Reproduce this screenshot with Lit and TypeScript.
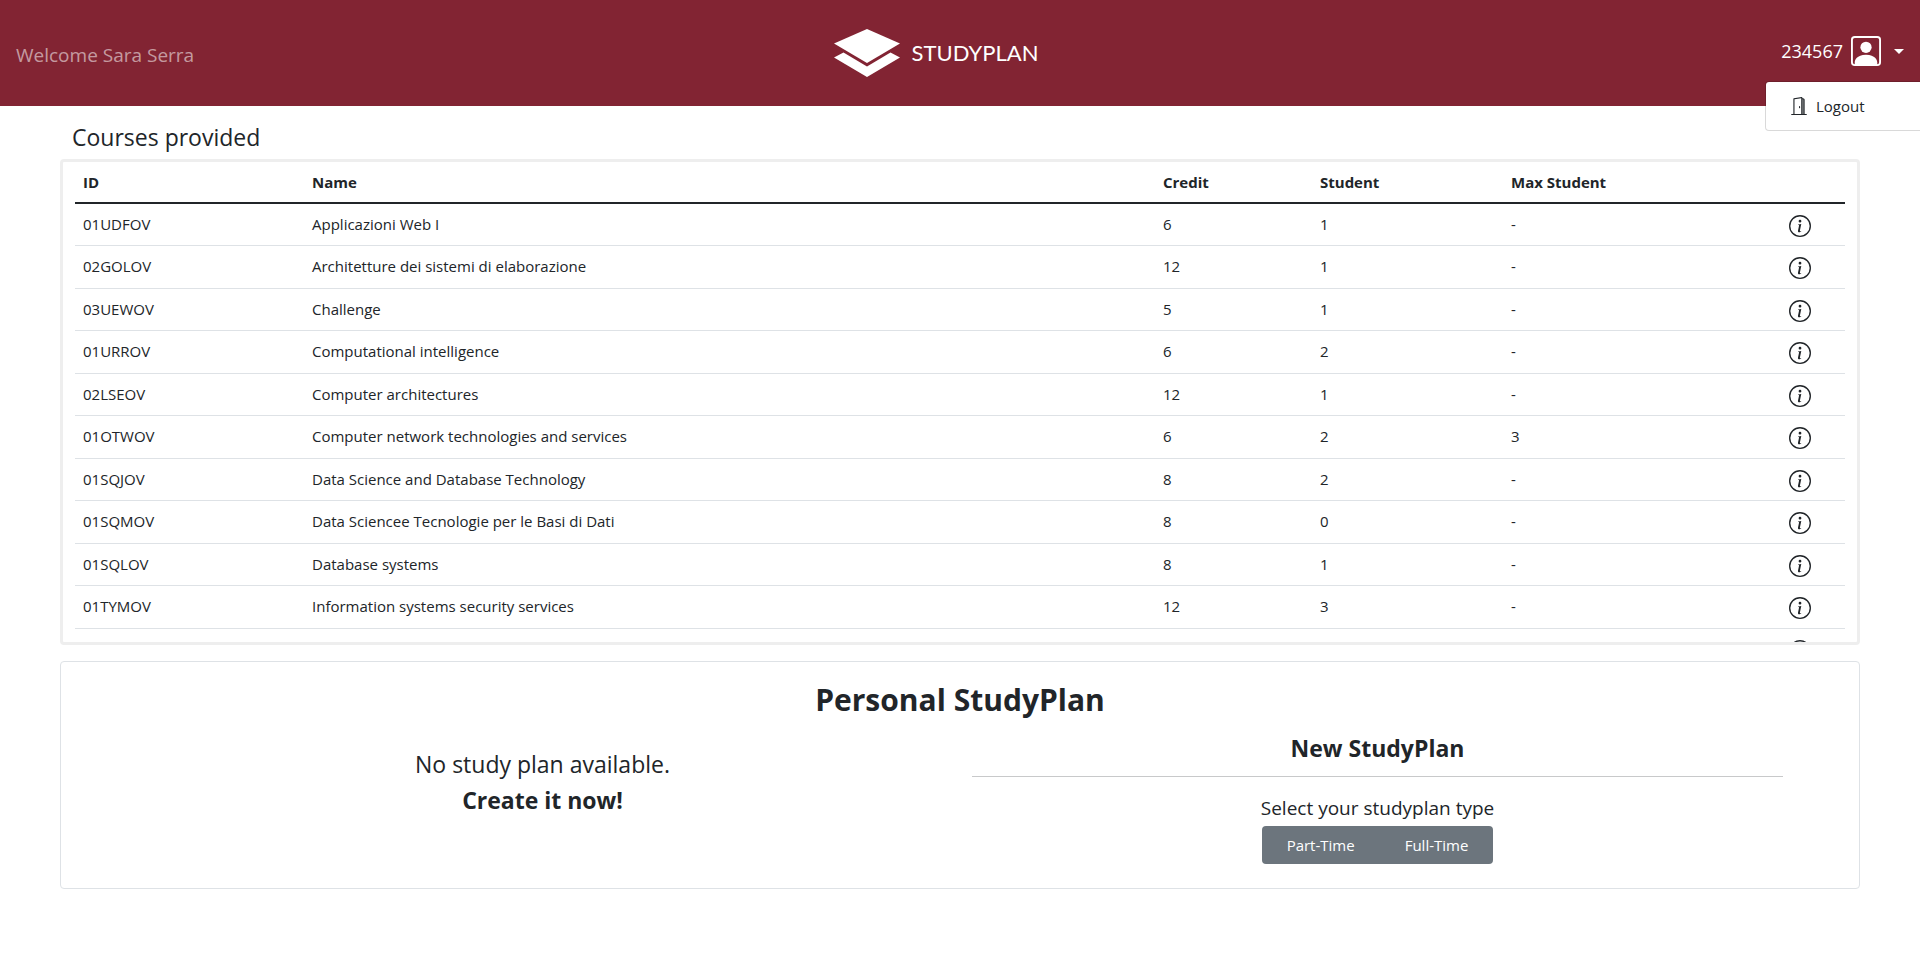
import { LitElement, html, css, svg } from "lit";
import { customElement, state } from "lit/decorators.js";

interface Course {
  id: string;
  name: string;
  credit: number;
  students: number;
  max?: number;
}

const COURSES: Course[] = [
  { id: "01UDFOV", name: "Applicazioni Web I", credit: 6, students: 1 },
  { id: "02GOLOV", name: "Architetture dei sistemi di elaborazione", credit: 12, students: 1 },
  { id: "03UEWOV", name: "Challenge", credit: 5, students: 1 },
  { id: "01URROV", name: "Computational intelligence", credit: 6, students: 2 },
  { id: "02LSEOV", name: "Computer architectures", credit: 12, students: 1 },
  { id: "01OTWOV", name: "Computer network technologies and services", credit: 6, students: 2, max: 3 },
  { id: "01SQJOV", name: "Data Science and Database Technology", credit: 8, students: 2 },
  { id: "01SQMOV", name: "Data Sciencee Tecnologie per le Basi di Dati", credit: 8, students: 0 },
  { id: "01SQLOV", name: "Database systems", credit: 8, students: 1 },
  { id: "01TYMOV", name: "Information systems security services", credit: 12, students: 3 },
  { id: "01UDUOV", name: "Internet Video Streaming", credit: 6, students: 1 },
];

const infoIcon = svg`
  <path d="M8 15A7 7 0 1 1 8 1a7 7 0 0 1 0 14zm0 1A8 8 0 1 0 8 0a8 8 0 0 0 0 16z"/>
  <path d="m8.93 6.588-2.29.287-.082.38.45.083c.294.07.352.176.288.469l-.738 3.468c-.194.897.105 1.319.808 1.319.545 0 1.178-.252 1.465-.598l.088-.416c-.2.176-.492.246-.686.246-.275 0-.375-.193-.304-.533L8.93 6.588zM9 4.5a1 1 0 1 1-2 0 1 1 0 0 1 2 0z"/>`;

const personIcon = svg`
  <path d="M11 6a3 3 0 1 1-6 0 3 3 0 0 1 6 0z"/>
  <path d="M2 0a2 2 0 0 0-2 2v12a2 2 0 0 0 2 2h12a2 2 0 0 0 2-2V2a2 2 0 0 0-2-2H2zm12 1a1 1 0 0 1 1 1v12a1 1 0 0 1-1 1v-1c0-1-1-4-6-4s-6 3-6 4v1a1 1 0 0 1-1-1V2a1 1 0 0 1 1-1h12z"/>`;

const doorIcon = svg`
  <path d="M11.500 1.500h.5a.5.5 0 0 1 .5.5V15h-2V1.500z" opacity=".5"/>
  <path d="M8.5 10c-.276 0-.5-.448-.5-1s.224-1 .5-1 .5.448.5 1-.224 1-.5 1z"/>
  <path d="M10.828.122A.5.5 0 0 1 11 .5V1h.5A1.5 1.5 0 0 1 13 2.5V15h1.5a.5.5 0 0 1 0 1h-13a.5.5 0 0 1 0-1H3V1.5a.5.5 0 0 1 .43-.495l7-1a.5.5 0 0 1 .398.117zM11.5 2H11v13h1V2.5a.5.5 0 0 0-.5-.5zM4 1.934V15h6V1.077l-6 .857z"/>`;

const base = css`
  :host {
    display: block;
    box-sizing: border-box;
  }
  *, *::before, *::after {
    box-sizing: border-box;
  }
  h1, h2, h3, p {
    margin: 0;
  }
  button {
    font: inherit;
    color: inherit;
    background: none;
    border: 0;
    padding: 0;
    cursor: pointer;
  }
`;

@customElement("plan-header")
class PlanHeader extends LitElement {
  @state() private menuOpen = true;

  static styles = [base, css`
    .bar {
      display: grid;
      grid-template-columns: 1fr auto 1fr;
      align-items: center;
      height: 106px;
      padding: 0 16px;
      background: #822433;
      color: #fff;
    }
    .welcome {
      padding-top: 4px;
      font-size: 19px;
      line-height: 32px;
      color: rgba(255, 255, 255, 0.55);
    }
    .brand {
      display: flex;
      align-items: center;
      gap: 12px;
      padding-right: 48px;
      color: #fff;
      text-decoration: none;
      font-family: Lato, sans-serif;
      font-size: 22px;
    }
    .brand svg {
      display: block;
    }
    .account {
      position: relative;
      justify-self: end;
      padding-bottom: 4px;
    }
    .toggle {
      display: flex;
      align-items: center;
      font-size: 18px;
      line-height: 32px;
    }
    .toggle svg {
      margin: 0 13px 0 8px;
    }
    .caret {
      border: 5px solid transparent;
      border-top-color: #fff;
      border-bottom: 0;
    }
    .menu {
      position: absolute;
      top: 46px;
      right: -16px;
      width: 155px;
      padding: 8px 0;
      background: #fff;
      border: 1px solid rgba(0, 0, 0, 0.15);
      border-right: 0;
      border-radius: 4px 0 0 4px;
      background-clip: padding-box;
      color: #212529;
    }
    .item {
      display: flex;
      align-items: center;
      gap: 8px;
      width: 100%;
      padding: 4px 24px;
    }
  `];

  render() {
    return html`
      <header class="bar">
        <span class="welcome">Welcome Sara Serra</span>
        <a class="brand" href="#">
          <svg width="66" height="48" viewBox="0 0 66 48" fill="#fff" aria-hidden="true">
            <path d="M33 0 66 14.500 33 34 0 14.500z"/>
            <path d="M0 28.500 9.500 23.500 33 37.500 56.500 23.500 66 28.500 33 48z"/>
          </svg>
          <span>STUDYPLAN</span>
        </a>
        <div class="account">
          <button class="toggle" aria-expanded=${this.menuOpen} @click=${() => (this.menuOpen = !this.menuOpen)}>
            <span>234567</span>
            <svg width="30" height="30" viewBox="0 0 16 16" fill="currentColor" aria-hidden="true">${personIcon}</svg>
            <span class="caret"></span>
          </button>
          ${this.menuOpen
            ? html`<div class="menu">
                <button class="item">
                  <svg width="18" height="18" viewBox="0 0 16 16" fill="currentColor" aria-hidden="true">${doorIcon}</svg>
                  <span>Logout</span>
                </button>
              </div>`
            : null}
        </div>
      </header>
    `;
  }
}

@customElement("course-table")
class CourseTable extends LitElement {
  static styles = [base, css`
    .title {
      padding: 0 12px;
      font-size: 23px;
      font-weight: 400;
      line-height: 28px;
    }
    .scroller {
      height: 486px;
      margin-top: 8px;
      padding: 0 12px;
      overflow-y: auto;
      scrollbar-width: none;
      border: 3px solid #eee;
      border-radius: 4px;
    }
    table {
      width: 100%;
      table-layout: fixed;
      border-collapse: collapse;
    }
    th, td {
      padding: 8px;
      text-align: left;
      vertical-align: top;
      border-bottom: 1px solid #dee2e6;
    }
    th {
      font-weight: 700;
      border-bottom: 2px solid #212529;
    }
    tbody tr {
      height: 42px;
    }
    tbody tr:nth-child(even) {
      height: 43px;
    }
    .c-id { width: 229px; }
    .c-credit { width: 157px; }
    .c-student { width: 191px; }
    .c-max { width: 251px; }
    .c-info { width: 91px; }
    .info {
      text-align: center;
    }
    .info svg {
      vertical-align: middle;
    }
  `];

  render() {
    return html`
      <h2 class="title">Courses provided</h2>
      <div class="scroller">
        <table>
          <colgroup>
            <col class="c-id" /><col /><col class="c-credit" /><col class="c-student" /><col class="c-max" /><col class="c-info" />
          </colgroup>
          <thead>
            <tr><th>ID</th><th>Name</th><th>Credit</th><th>Student</th><th>Max Student</th><th></th></tr>
          </thead>
          <tbody>
            ${COURSES.map((c) => html`
              <tr>
                <td>${c.id}</td>
                <td>${c.name}</td>
                <td>${c.credit}</td>
                <td>${c.students}</td>
                <td>${c.max ?? "-"}</td>
                <td class="info">
                  <button aria-label="Details of ${c.name}"><svg width="22" height="22" viewBox="0 0 16 16" fill="currentColor">${infoIcon}</svg></button>
                </td>
              </tr>`)}
          </tbody>
        </table>
      </div>
    `;
  }
}

@customElement("study-plan")
class StudyPlan extends LitElement {
  static styles = [base, css`
    .card {
      padding: 16px 76px 24px;
      border: 1px solid #dee2e6;
      border-radius: 4px;
      text-align: center;
    }
    .title {
      font-size: 30px;
      font-weight: 700;
      line-height: 44px;
    }
    .columns {
      display: grid;
      grid-template-columns: 1fr 1fr;
      gap: 24px;
    }
    .empty {
      padding-top: 24px;
      font-size: 23px;
      line-height: 36px;
    }
    .new {
      display: flex;
      flex-direction: column;
      align-items: center;
      padding-top: 12px;
    }
    .subtitle {
      font-size: 23px;
      font-weight: 700;
      line-height: 28px;
    }
    hr {
      width: 100%;
      height: 1px;
      margin: 14px 0 16px;
      border: 0;
      background: #c8c9ca;
    }
    .prompt {
      font-size: 19px;
      line-height: 30px;
    }
    .group {
      display: flex;
      margin-top: 3px;
      overflow: hidden;
      border-radius: 4px;
    }
    .group button {
      padding: 7px 25px;
      background: #6c757d;
      color: #fff;
    }
  `];

  render() {
    return html`
      <section class="card">
        <h1 class="title">Personal StudyPlan</h1>
        <div class="columns">
          <p class="empty">No study plan available.<br /><b>Create it now!</b></p>
          <div class="new">
            <h3 class="subtitle">New StudyPlan</h3>
            <hr />
            <span class="prompt" id="prompt">Select your studyplan type</span>
            <div class="group" role="group" aria-labelledby="prompt">
              <button>Part-Time</button>
              <button>Full-Time</button>
            </div>
          </div>
        </div>
      </section>
    `;
  }
}

@customElement("app-root")
class AppRoot extends LitElement {
  static styles = [base, css`
    :host {
      min-height: 100vh;
      background: #fff;
      color: #212529;
      font-family: "Open Sans", "Noto Sans", sans-serif;
      font-size: 15px;
      line-height: 24px;
    }
    .page {
      display: flex;
      flex-direction: column;
      gap: 16px;
      padding: 17px 60px;
    }
  `];

  render() {
    return html`
      <plan-header></plan-header>
      <main class="page">
        <course-table></course-table>
        <study-plan></study-plan>
      </main>
    `;
  }
}
